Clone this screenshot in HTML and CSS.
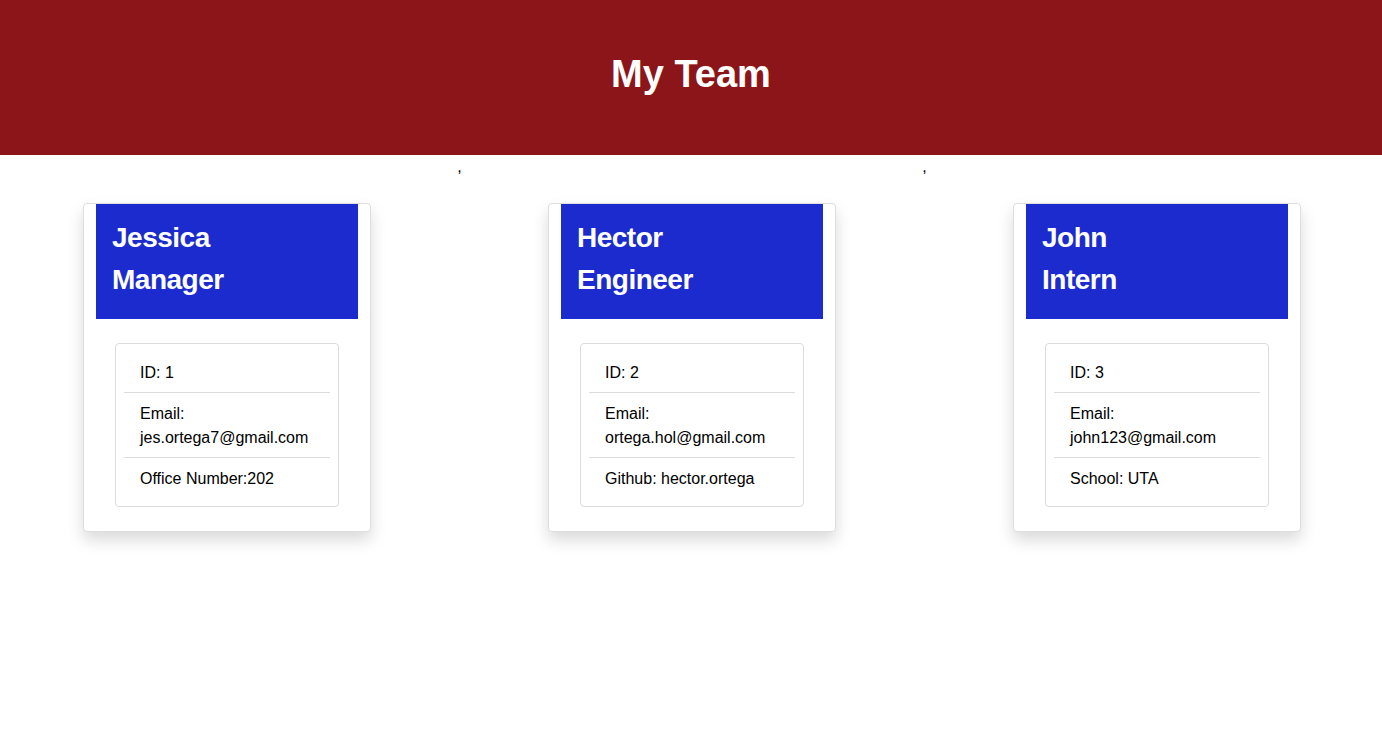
FILE: index.html
```html
<!DOCTYPE html>
<html>
	<head>
		<meta charset="utf-8">
		<title>My Team</title>
		<link rel="stylesheet" href="styles.css">
	</head>
	<body>
		<div class="jumbotron">
			<h1>My Team</h1>
		</div>
		<div class="team">
			<div class="card">
				<div class="card-header">
					<h3>Jessica</h3>
					<h3>Manager</h3>
				</div>
				<div class="card-body">
					<ul class="list-group">
						<li>ID: 1</li>
						<li>Email: jes.ortega7@gmail.com</li>
						<li>Office Number:202</li>
					</ul>
				</div>
			</div>
			<span class="sep">,</span>
			<div class="card">
				<div class="card-header">
					<h3>Hector</h3>
					<h3>Engineer</h3>
				</div>
				<div class="card-body">
					<ul class="list-group">
						<li>ID: 2</li>
						<li>Email: ortega.hol@gmail.com</li>
						<li>Github: hector.ortega</li>
					</ul>
				</div>
			</div>
			<span class="sep">,</span>
			<div class="card">
				<div class="card-header">
					<h3>John</h3>
					<h3>Intern</h3>
				</div>
				<div class="card-body">
					<ul class="list-group">
						<li>ID: 3</li>
						<li>Email: john123@gmail.com</li>
						<li>School: UTA</li>
					</ul>
				</div>
			</div>
		</div>
	</body>
</html>
```

FILE: styles.css
```css
body, h1, h3, ul{
	margin: 0;
	padding: 0;
}
body{
	font-family: "Liberation Sans", Arial, sans-serif;
	font-size: 16px;
	line-height: 24px;
	color: #000;
	background-color: #fff;
}
.jumbotron{
	background-color: #8c1519;
	padding: 50px 0 49px;
	text-align: center;
}
.jumbotron h1{
	color: #fff;
	font-size: 38px;
	font-weight: bold;
	line-height: 48px;
	margin-bottom: 8px;
}
.team{
	display: flex;
	justify-content: space-evenly;
	align-items: flex-start;
	padding: 0 0 40px 2px;
}
.sep{
	width: 15px;
	text-align: center;
}
.card{
	width: 288px;
	box-sizing: border-box;
	margin-top: 48px;
	padding: 0 12px;
	border: 1px solid #dedede;
	border-radius: 4px;
	background-color: #fff;
	box-shadow: 0 8px 16px rgba(0, 0, 0, .15);
}
.card-header{
	background-color: #1c2bce;
	padding: 17px 16px 15px;
}
.card-header h3{
	color: #fff;
	font-size: 28px;
	font-weight: bold;
	letter-spacing: -0.5px;
	line-height: 33.6px;
	margin-bottom: 8px;
}
.card-body{
	padding: 24px 19px;
}
.list-group{
	list-style: none;
	padding: 8px;
	border: 1px solid #dcdcdc;
	border-radius: 4px;
}
.list-group li{
	padding: 9px 16px 7px;
}
.list-group li + li{
	border-top: 1px solid #dcdcdc;
}
```
